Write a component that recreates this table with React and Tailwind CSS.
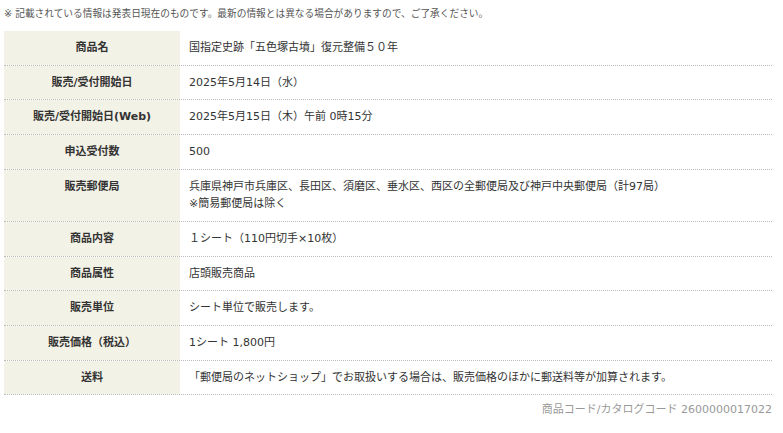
export default function App() {
  const rows = [
    ["商品名", ["国指定史跡「五色塚古墳」復元整備５０年"]],
    ["販売/受付開始日", ["2025年5月14日（水）"]],
    ["販売/受付開始日(Web)", ["2025年5月15日（木）午前 0時15分"]],
    ["申込受付数", ["500"]],
    ["販売郵便局", ["兵庫県神戸市兵庫区、長田区、須磨区、垂水区、西区の全郵便局及び神戸中央郵便局（計97局）", "※簡易郵便局は除く"]],
    ["商品内容", ["１シート（110円切手×10枚）"]],
    ["商品属性", ["店頭販売商品"]],
    ["販売単位", ["シート単位で販売します。"]],
    ["販売価格（税込）", ["1シート 1,800円"]],
    ["送料", ["「郵便局のネットショップ」でお取扱いする場合は、販売価格のほかに郵送料等が加算されます。"]],
  ];
  return (
    <div
      className="w-[783px] h-[433px] bg-white px-[4px] text-[#333]"
      style={{ fontFamily: '"DejaVu Sans", "Noto Sans CJK JP", sans-serif' }}
    >
      <div className="pt-[7px] text-[9.7px] leading-[14px] text-[#555]">
        ※ 記載されている情報は発表日現在のものです。最新の情報とは異なる場合がありますので、ご了承ください。
      </div>
      <div className="mt-[10px] w-[768px]">
        {rows.map(([label, values]) => (
          <div key={label} className="flex border-b border-dotted border-[#bbbbbb]">
            <div className="w-[176px] shrink-0 bg-[#f3f2e7] py-2 text-center text-[11px] font-bold leading-[17.67px]">
              {label}
            </div>
            <div className="flex-1 py-2 pl-[9px] text-[11px] leading-[17.67px]">
              {values.map((v) => (
                <div key={v}>{v}</div>
              ))}
            </div>
          </div>
        ))}
      </div>
      <div className="mt-[6px] w-[768px] text-right text-[11px] leading-[18px] text-[#999]">
        商品コード/カタログコード 2600000017022
      </div>
    </div>
  );
}
